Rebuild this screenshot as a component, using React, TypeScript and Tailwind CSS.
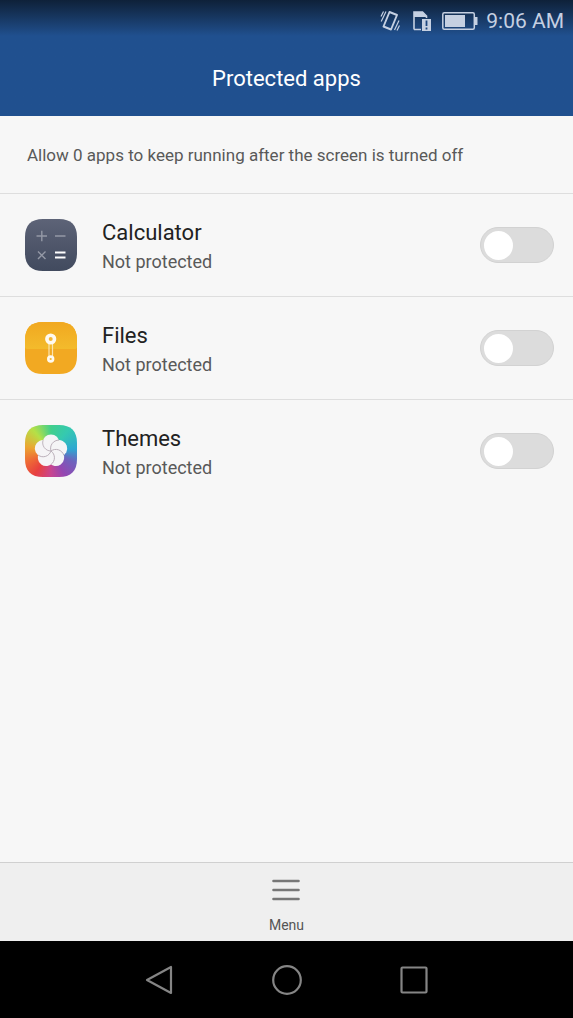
import React, { useState } from 'react';

const ICON_SHAPE =
  'M18 0H34C46 0 52 6 52 18V34C52 46 46 52 34 52H18C6 52 0 46 0 34V18C0 6 6 0 18 0Z';

function CalculatorIcon() {
  return (
    <svg viewBox="0 0 52 52" className="size-[52px] shrink-0" aria-hidden="true">
      <defs>
        <linearGradient id="calc" x1="0" y1="0" x2="0" y2="1">
          <stop offset="0" stopColor="#5d6377" />
          <stop offset="1" stopColor="#414a5e" />
        </linearGradient>
      </defs>
      <path d={ICON_SHAPE} fill="url(#calc)" />
      <g stroke="#9499a6" strokeWidth="1.4">
        <path d="M11.5 17H22M16.8 11.7V22.3M30 17H40.5" />
        <path d="M13 32.5L20.5 40M20.5 32.5L13 40" />
      </g>
      <path d="M30 33.5H40.5M30 38.5H40.5" stroke="#fff" strokeWidth="1.8" />
    </svg>
  );
}

function FilesIcon() {
  return (
    <svg viewBox="0 0 52 52" className="size-[52px] shrink-0" aria-hidden="true">
      <defs>
        <linearGradient id="flap" x1="0" y1="0" x2="0" y2="1">
          <stop offset="0" stopColor="#f1a820" />
          <stop offset="1" stopColor="#f3bb2c" />
        </linearGradient>
        <clipPath id="files-clip">
          <path d={ICON_SHAPE} />
        </clipPath>
      </defs>
      <g clipPath="url(#files-clip)">
        <rect width="52" height="52" fill="#f2a922" />
        <path d="M0 0H52V25Q52 27 49 27H3Q0 27 0 25Z" fill="url(#flap)" />
      </g>
      <path d="M24 20V36M27.5 20V36" stroke="#fbe3ae" strokeWidth="1.2" />
      <circle cx="25.7" cy="17" r="3.8" fill="#f3b737" stroke="#fffaf0" strokeWidth="3.6" />
      <circle cx="25.7" cy="37" r="2.4" fill="#f3b737" stroke="#fffaf0" strokeWidth="2.6" />
    </svg>
  );
}

function ThemesIcon() {
  const angles = [0, 72, 144, 216, 288];
  return (
    <span className="size-[52px] shrink-0 bg-[conic-gradient(#41cf8c,#35c9b0_40deg,#2ea7d2_85deg,#6d63bd_115deg,#9447b2_150deg,#c84590_180deg,#e8403f_215deg,#ee6a35_245deg,#eba632_280deg,#b5e047_320deg,#41cf8c)] [clip-path:path('M18_0H34C46_0_52_6_52_18V34C52_46_46_52_34_52H18C6_52_0_46_0_34V18C0_6_6_0_18_0Z')]">
      <svg viewBox="-26 -26 52 52" className="size-[52px]" aria-hidden="true">
        <g fill="#f5f4f6">
          {angles.map((a) => (
            <circle key={a} cy="-8.3" r="8.3" transform={`rotate(${a})`} />
          ))}
        </g>
        <g fill="none" stroke="#b9aeb8" strokeWidth="0.9">
          {angles.map((a) => (
            <path key={a} d="M0 0A8.3 8.3 0 0 1 -7.9 -10.9" transform={`rotate(${a})`} />
          ))}
        </g>
      </svg>
    </span>
  );
}

const apps = [
  { id: 'calculator', name: 'Calculator', Icon: CalculatorIcon },
  { id: 'files', name: 'Files', Icon: FilesIcon },
  { id: 'themes', name: 'Themes', Icon: ThemesIcon },
];

function StatusBar() {
  return (
    <div className="flex h-10 items-center justify-end pt-0.5 pr-[9px] text-[#c5d0e2]">
      <svg viewBox="0 0 20 22" className="mr-3 h-[22px] w-5" fill="none" stroke="currentColor" aria-hidden="true">
        <path d="M9.5 2L17 5L11 19.5L3.5 16.5Z" strokeWidth="1.9" strokeLinejoin="round" />
        <path d="M1 6.5L3.5 1.5M1.2 11.5L6 1.5M14.5 20L19 10.5M17 20.5L19.5 15.5" strokeWidth="1.2" />
      </svg>
      <svg viewBox="0 0 20 22" className="mr-2.5 h-[22px] w-5" aria-hidden="true">
        <path d="M2 19.5V2H10.5L14.5 6V8M2 19.5H9" fill="none" stroke="currentColor" strokeWidth="1.6" />
        <path d="M2 2H10.5L14.5 6V7H2Z" fill="currentColor" />
        <path d="M10 9H19V21H10Z" fill="currentColor" />
        <path d="M14.5 10.5V16M14.5 17.5V19.5" stroke="#1d467f" strokeWidth="1.8" />
      </svg>
      <svg viewBox="0 0 36 18" className="mr-2 h-[18px] w-9" aria-hidden="true">
        <rect x="0.8" y="0.8" width="31.5" height="16.4" rx="1.5" fill="none" stroke="currentColor" strokeWidth="1.5" />
        <rect x="3" y="3" width="20" height="12" fill="currentColor" />
        <path d="M33 5H35.5V13H33Z" fill="currentColor" />
      </svg>
      <span className="text-[21px] leading-none">9:06 AM</span>
    </div>
  );
}

export default function App() {
  const [enabled, setEnabled] = useState<Record<string, boolean>>({});
  const count = Object.values(enabled).filter(Boolean).length;

  const toggle = (id: string) => {
    setEnabled((prev) => ({ ...prev, [id]: !prev[id] }));
  };

  return (
    <div className="flex min-h-screen flex-col bg-[#f7f7f7] font-[Roboto,sans-serif]">
      {/* Header */}
      <header className="bg-[#20508f] bg-linear-to-b from-[#0e2139] to-[#20508f] to-[36px]">
        <StatusBar />
        <h1 className="flex h-[76px] items-center justify-center text-[22px] text-white">
          Protected apps
        </h1>
      </header>

      {/* App list */}
      <main className="flex-1">
        <p className="flex h-[77px] items-center px-[27px] pt-0.5 text-[17px] text-[#595959]">
          Allow {count} apps to keep running after the screen is turned off
        </p>
        <ul>
          {apps.map(({ id, name, Icon }) => (
            <li key={id} className="border-t border-[#dedede]">
              <label htmlFor={id} className="flex h-[102px] items-center pr-[19px] pl-[25px]">
                <Icon />
                <span className="ml-[25px] flex-1 pt-1">
                  <span className="block text-[22px] leading-[29px] text-[#222]">{name}</span>
                  <span className="block text-[18px] leading-[29px] text-[#595959]">
                    {enabled[id] ? 'Protected' : 'Not protected'}
                  </span>
                </span>
                <input
                  id={id}
                  type="checkbox"
                  role="switch"
                  checked={!!enabled[id]}
                  onChange={() => toggle(id)}
                  className="flex h-9 w-[74px] appearance-none items-center rounded-full border border-[#d2d2d2] bg-[#dcdcdc] px-[3px] before:size-[29px] before:rounded-full before:bg-white checked:justify-end checked:bg-[#20508f]"
                />
              </label>
            </li>
          ))}
        </ul>
      </main>

      {/* Bottom menu */}
      <div className="flex h-[79px] justify-center border-t border-[#d0d0d0] bg-[#efefef]">
        <button type="button" className="flex flex-col items-center px-6 pt-4 text-[#555]">
          <svg viewBox="0 0 28 22" className="h-[22px] w-7" aria-hidden="true">
            <path d="M1.5 2H26.5M1.5 11H26.5M1.5 20H26.5" stroke="#777" strokeWidth="2.6" strokeLinecap="round" />
          </svg>
          <span className="mt-3.5 text-[14px] leading-5">Menu</span>
        </button>
      </div>

      {/* Navigation keys */}
      <nav className="flex h-[77px] items-center justify-center gap-[97px] bg-black">
        <button type="button" aria-label="Back">
          <svg viewBox="0 0 30 30" className="size-[30px]" fill="none" stroke="#858585" strokeWidth="2.2" strokeLinejoin="round" aria-hidden="true">
            <path d="M26 2V28L2 15Z" />
          </svg>
        </button>
        <button type="button" aria-label="Home">
          <svg viewBox="0 0 30 30" className="size-[30px]" fill="none" stroke="#858585" strokeWidth="2.2" aria-hidden="true">
            <circle cx="15" cy="15" r="13.8" />
          </svg>
        </button>
        <button type="button" aria-label="Recent apps">
          <svg viewBox="0 0 30 30" className="size-[30px]" fill="none" stroke="#858585" strokeWidth="2.2" aria-hidden="true">
            <rect x="2.5" y="2.5" width="25" height="25" rx="1" />
          </svg>
        </button>
      </nav>
    </div>
  );
}
